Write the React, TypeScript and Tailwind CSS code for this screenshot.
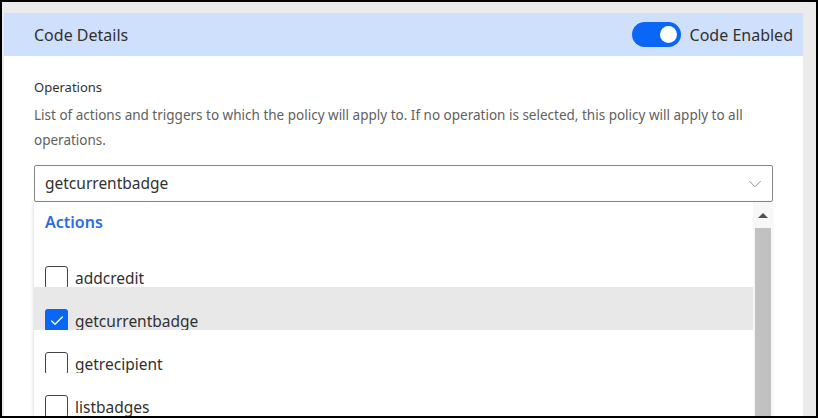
import { Check, ChevronDown } from 'lucide-react';

const items = [
  { name: 'addcredit', checked: false },
  { name: 'getcurrentbadge', checked: true },
  { name: 'getrecipient', checked: false },
  { name: 'listbadges', checked: false },
];

function Toggle() {
  return (
    <div className="flex h-[25px] w-[49px] items-center justify-end rounded-full bg-[#0a66f5] pr-[4px]">
      <div className="h-[17px] w-[17px] rounded-full bg-white" />
    </div>
  );
}

function Item({ name, checked }: { name: string; checked: boolean }) {
  return (
    <div className={`relative flex h-[43px] items-start gap-[7px] pl-[11px] pt-[22px] ${checked ? 'bg-[#e8e8e8]' : 'bg-white'}`}>
      {checked ? (
        <div className="flex h-[23px] w-[23px] shrink-0 items-center justify-center rounded-[3px] bg-[#0a66f5]">
          <Check className="h-[16px] w-[16px] text-white" strokeWidth={2} />
        </div>
      ) : (
        <div className="h-[23px] w-[23px] shrink-0 rounded-[3px] border-[1.5px] border-[#444] bg-white" />
      )}
      <span className="text-[15.5px] leading-[24px] text-[#323130]">{name}</span>
    </div>
  );
}

export default function App() {
  return (
    <div
      className="h-[418px] w-[818px] overflow-hidden border-2 border-black bg-[#ebebeb] pl-[2px] pr-[13px] pt-[11px]"
      style={{ fontFamily: '"Noto Sans", "Open Sans", sans-serif' }}
    >
      <div className="flex h-full flex-col bg-white">
        <div className="flex h-[43px] shrink-0 items-center justify-between bg-[#cfe0fc] pl-[30px] pr-[10px]">
          <span className="text-[16px] text-[#323130]">Code Details</span>
          <div className="flex items-center gap-[9px]">
            <Toggle />
            <span className="text-[16px] text-[#323130]">Code Enabled</span>
          </div>
        </div>

        <div className="flex flex-1 flex-col pl-[30px] pr-[30px] pt-[19px]">
          <div className="text-[13px] leading-[24px] text-[#323130]">Operations</div>
          <p className="mt-[4px] text-[13.5px] leading-[25px] text-[#616161]">
            List of actions and triggers to which the policy will apply to. If no operation is selected, this policy will apply to all operations.
          </p>

          <div className="mt-[12px] flex h-[37px] w-[739px] shrink-0 items-center justify-between rounded-[2px] border border-[#8a8886] pl-[10px] pr-[6px]">
            <span className="text-[15.5px] text-[#323130]">getcurrentbadge</span>
            <ChevronDown className="h-[22px] w-[22px] text-[#8a8886]" strokeWidth={1} />
          </div>

          <div className="flex w-[739px] flex-1 shadow-[-1px_0_3px_rgba(0,0,0,0.12)]">
            <div className="flex-1">
              <div className="h-[42px] pl-[11px] pt-[8px] text-[16px] font-semibold leading-[24px] text-[#2f6be3]">
                Actions
              </div>
              {items.map((it) => (
                <Item key={it.name} name={it.name} checked={it.checked} />
              ))}
            </div>
            <div className="flex w-[20px] flex-col bg-[#f7f7f7]">
              <div className="flex h-[26px] items-center justify-center">
                <div className="h-0 w-0 border-x-[5px] border-b-[5px] border-x-transparent border-b-[#505050]" />
              </div>
              <div className="mx-[2px] flex-1 bg-[#c1c1c1]" />
            </div>
          </div>
        </div>
      </div>
    </div>
  );
}
